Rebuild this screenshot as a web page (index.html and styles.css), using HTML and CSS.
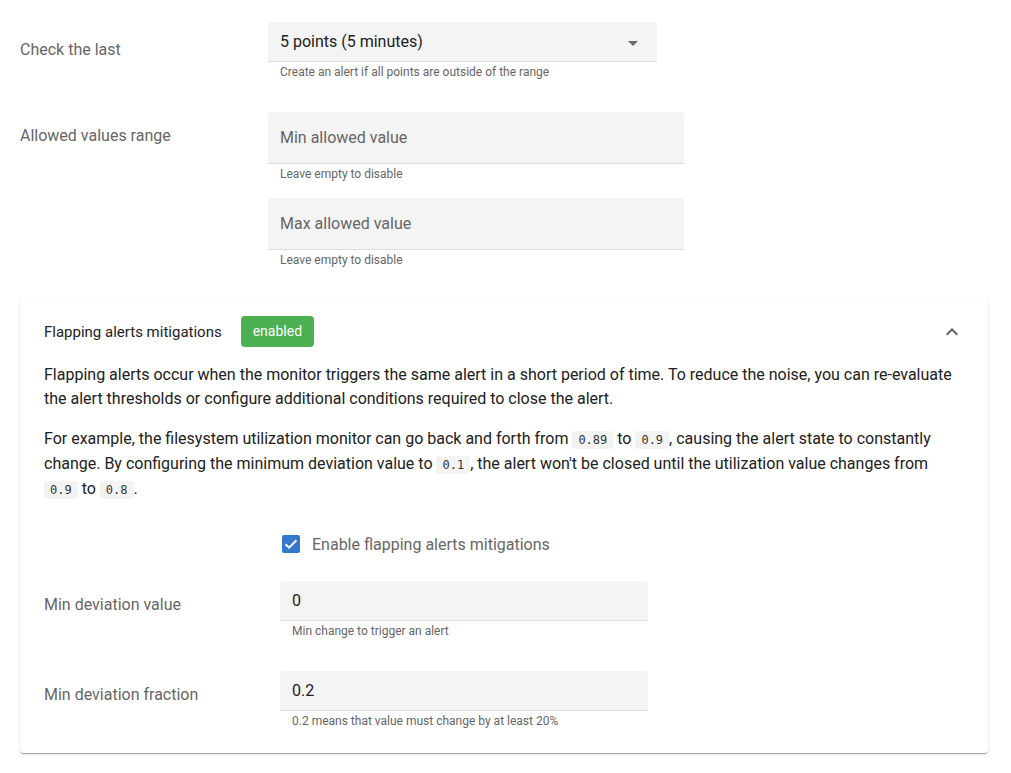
FILE: index.html
```html
<!DOCTYPE html>
<html lang="en">
<head>
<meta charset="utf-8">
<title>Alert settings</title>
<link rel="stylesheet" href="styles.css">
</head>
<body>
<div class="page">
  <div class="form-row">
    <div class="row-label row-label--first">Check the last</div>
    <div class="control">
      <div class="field field--select">
        <span class="field-value">5 points (5 minutes)</span>
        <svg class="select-arrow" width="24" height="24" viewBox="0 0 24 24"><path d="M7 10l5 5 5-5z" fill="#6b6b6b"/></svg>
      </div>
      <div class="helper">Create an alert if all points are outside of the range</div>
    </div>
  </div>

  <div class="form-row">
    <div class="row-label">Allowed values range</div>
    <div class="control control--stack">
      <div class="group">
        <div class="field field--tall field--wide"><span class="placeholder">Min allowed value</span></div>
        <div class="helper">Leave empty to disable</div>
      </div>
      <div class="group">
        <div class="field field--tall field--wide"><span class="placeholder">Max allowed value</span></div>
        <div class="helper">Leave empty to disable</div>
      </div>
    </div>
  </div>

  <section class="card">
    <div class="card-head">
      <span class="card-title">Flapping alerts mitigations</span>
      <span class="badge">enabled</span>
      <svg class="chevron" width="24" height="24" viewBox="0 0 24 24"><path d="M12 8l-6 6 1.41 1.41L12 10.83l4.59 4.58L18 14z" fill="#5f5f5f"/></svg>
    </div>
    <p class="text">Flapping alerts occur when the monitor triggers the same alert in a short period of time. To reduce the noise, you can re-evaluate the alert thresholds or configure additional conditions required to close the alert.</p>
    <p class="text">For example, the filesystem utilization monitor can go back and forth from <code>0.89</code> to <code>0.9</code>, causing the alert state to constantly change. By configuring the minimum deviation value to <code>0.1</code>, the alert won't be closed until the utilization value changes from <code>0.9</code> to <code>0.8</code>.</p>

    <div class="card-form">
      <div class="form-row form-row--check">
        <div class="row-label row-label--card"></div>
        <label class="check">
          <svg class="check-box" width="20" height="20" viewBox="0 0 20 20"><rect x="1" y="1" width="18" height="18" rx="2" fill="#3478cc"/><path d="M4.6 10.2l3.4 3.4 7.4-7.4" fill="none" stroke="#fff" stroke-width="2"/></svg>
          <span class="check-text">Enable flapping alerts mitigations</span>
        </label>
      </div>
      <div class="form-row form-row--after-check">
        <div class="row-label row-label--card">Min deviation value</div>
        <div class="control">
          <div class="field field--card"><span class="field-value">0</span></div>
          <div class="helper">Min change to trigger an alert</div>
        </div>
      </div>
      <div class="form-row">
        <div class="row-label row-label--card">Min deviation fraction</div>
        <div class="control">
          <div class="field field--card"><span class="field-value">0.2</span></div>
          <div class="helper">0.2 means that value must change by at least 20%</div>
        </div>
      </div>
    </div>
  </section>
</div>
</body>
</html>
```

FILE: styles.css
```css
html, body {
  margin: 0;
  background: #ffffff;
}

body {
  font-family: Roboto, "Noto Sans", "Liberation Sans", sans-serif;
  color: #212121;
}

.page {
  padding: 22px 23px 21px 20px;
}

.form-row {
  display: flex;
  align-items: flex-start;
}

.form-row + .form-row {
  margin-top: 33px;
}

.row-label {
  flex: none;
  width: 248px;
  padding-top: 14px;
  font-size: 16px;
  line-height: 19px;
  color: #666666;
}

.row-label--first {
  padding-top: 18px;
}

.row-label--card {
  width: 236px;
}

.control {
  display: flex;
  flex-direction: column;
}

.control--stack {
  gap: 17px;
}

.field {
  box-sizing: border-box;
  display: flex;
  align-items: center;
  height: 40px;
  padding: 0 12px;
  background: #f4f4f4;
  border-radius: 4px 4px 0 0;
  border-bottom: 1px solid #dddddd;
  font-size: 16px;
  line-height: 19px;
}

.field--select {
  width: 389px;
  justify-content: space-between;
}

.field--tall {
  height: 52px;
}

.field--wide {
  width: 416px;
}

.field--card {
  width: 368px;
}

.field-value {
  color: #212121;
}

.placeholder {
  color: #666666;
}

.select-arrow {
  display: block;
  margin-top: 2px;
}

.helper {
  margin-top: 3px;
  padding-left: 12px;
  font-size: 12px;
  line-height: 14px;
  color: #666666;
}

.card {
  margin-top: 33px;
  padding: 16px 24px 25px;
  background: #ffffff;
  border-radius: 4px;
  box-shadow: 0 2px 1px -1px rgba(0, 0, 0, 0.2), 0 1px 1px 0 rgba(0, 0, 0, 0.14), 0 1px 3px 0 rgba(0, 0, 0, 0.12);
}

.card-head {
  display: flex;
  align-items: center;
  height: 31px;
}

.card-title {
  font-size: 15px;
  line-height: 18px;
  color: #212121;
}

.badge {
  margin-left: 19px;
  padding: 7px 12px;
  font-size: 14px;
  line-height: 17px;
  color: #ffffff;
  background: #4caf50;
  border-radius: 4px;
}

.chevron {
  display: block;
  margin-left: auto;
}

.text {
  margin: 16px 0 0;
  font-size: 16px;
  line-height: 24px;
  color: #212121;
}

code {
  font-family: "DejaVu Sans Mono", "Liberation Mono", monospace;
  font-size: 12px;
  padding: 2px 6px;
  background: #f3f3f3;
  border-radius: 3px;
  color: #333333;
}

.card-form {
  margin-top: 22px;
}

.form-row--check {
  align-items: center;
  height: 40px;
}

.form-row--check .row-label {
  padding-top: 0;
}

.form-row + .form-row--after-check {
  margin-top: 17px;
}

.check {
  display: flex;
  align-items: center;
}

.check-box {
  display: block;
  margin-left: 1px;
}

.check-text {
  margin-left: 11px;
  font-size: 16px;
  line-height: 19px;
  color: #666666;
}
```
